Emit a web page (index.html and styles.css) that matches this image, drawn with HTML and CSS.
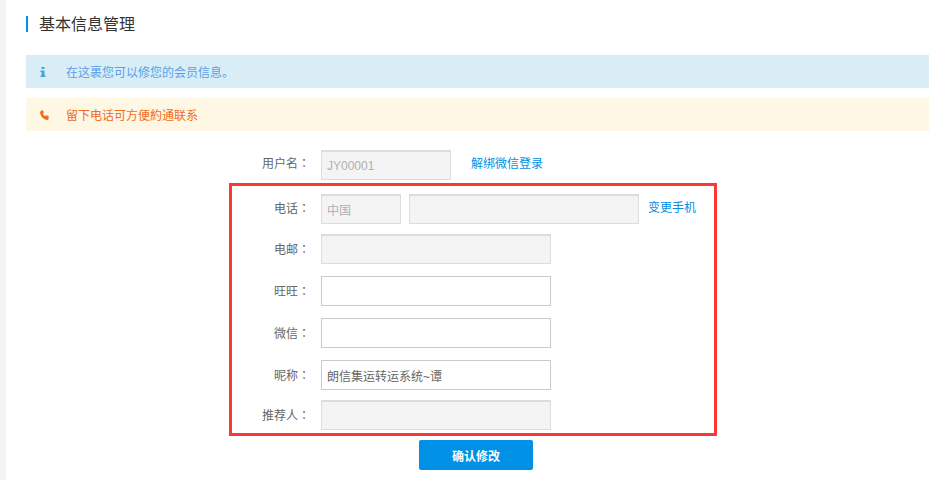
FILE: index.html
```html
<!DOCTYPE html>
<html lang="zh">
<head>
<meta charset="utf-8">
<title>基本信息管理</title>
<link rel="stylesheet" href="styles.css">
</head>
<body>
<div class="page">
  <div class="strip"></div>
  <main class="main">
    <h1 class="title">基本信息管理</h1>
    <div class="alert alert-info">
      <span class="alert-icon"><svg width="6" height="10" viewBox="0 0 6 10"><path fill="#3ea6dc" d="M1.500 0h3v2h-3zM.5 3.500h4V8.500H5.500V10H.5V8.500h1V5H.5z"/></svg></span>
      <span>在这裹您可以修您的会员信息。</span>
    </div>
    <div class="alert alert-warn">
      <span class="alert-icon"><svg width="10" height="10" viewBox="0 0 10 10"><path fill="#f26c21" d="M.4 1.500 2 .2c.3-.2.6-.1.8.2l1 1.700c.1.300.1.500-.1.700l-.8.800c.3 1.200 1.200 2.200 2.400 2.600l.8-.8c.2-.2.500-.2.700-.1l1.700 1c.3.200.4.500.2.800L8.300 9.700c-.2.200-.5.300-.8.300C3.500 9.500.5 6.500 0 2.300c0-.3.100-.6.400-.8z"/></svg></span>
      <span>留下电话可方便約通联系</span>
    </div>
    <form class="form">
      <div class="row row-first">
        <label class="label">用户名<span class="colon" lang="zh-TW">：</span></label>
        <input class="input disabled w130" value="JY00001" disabled>
        <a class="link link-wx">解绑微信登录</a>
      </div>
      <div class="marked">
        <div class="row row-phone">
          <label class="label">电话<span class="colon" lang="zh-TW">：</span></label>
          <input class="input disabled w80" value="中国" disabled>
          <input class="input disabled w230 gap8" disabled>
          <a class="link link-phone">变更手机</a>
        </div>
        <div class="row mt10"><label class="label">电邮<span class="colon" lang="zh-TW">：</span></label><input class="input disabled w230" disabled></div>
        <div class="row mt12"><label class="label">旺旺<span class="colon" lang="zh-TW">：</span></label><input class="input w230"></div>
        <div class="row mt12"><label class="label">微信<span class="colon" lang="zh-TW">：</span></label><input class="input w230"></div>
        <div class="row mt12"><label class="label">昵称<span class="colon" lang="zh-TW">：</span></label><input class="input w230" value="朗信集运转运系统~谭"></div>
        <div class="row mt10"><label class="label">推荐人<span class="colon" lang="zh-TW">：</span></label><input class="input disabled w230" disabled></div>
      </div>
      <button class="submit" type="button">确认修改</button>
    </form>
  </main>
</div>
</body>
</html>
```

FILE: styles.css
```css
* { box-sizing: border-box; }
html, body { margin: 0; padding: 0; background: #fff; overflow: hidden; }
body {
  font-family: "Liberation Sans", "Noto Sans CJK SC", sans-serif;
  font-size: 12px;
  color: #666;
}
.page { display: flex; width: 929px; height: 480px; overflow: hidden; }
.strip { width: 6px; flex: none; background: #f4f4f4; }
.main { flex: 1; min-width: 0; padding: 16px 0 0 20px; }
.title {
  margin: 0 0 23px;
  height: 16px;
  border-left: 2px solid #0090e6;
  padding-left: 11px;
  font-size: 16px;
  font-weight: 400;
  line-height: 17px;
  color: #333;
}
.alert {
  display: flex;
  align-items: center;
  height: 33px;
  margin-bottom: 10px;
  font-size: 12px;
}
.alert-icon { width: 40px; padding-left: 14px; display: flex; align-items: center; }
.alert-info { background: #d9edf7; color: #5b9fe8; }
.alert-warn { background: #fdf7e3; color: #f26c21; }
.form { display: block; padding-top: 9px; }
.row { display: flex; align-items: center; height: 30px; }
.label { text-align: right; flex: none; color: #666; margin-right: 11px; margin-top: -2px; }
.colon { font-family: "Noto Sans CJK TC", sans-serif; }
.input {
  height: 30px;
  border: 1px solid #ccc;
  background: #fff;
  padding: 0 5px;
  font: inherit;
  color: #666;
  outline: none;
  flex: none;
}
.disabled { background: #f4f4f4; border-color: #ddd; border-top-width: 2px; color: #b0b0b0; }
.w80 { width: 80px; }
.w130 { width: 130px; }
.w230 { width: 230px; }
.gap8 { margin-left: 8px; }
.link { color: #0090e6; white-space: nowrap; cursor: pointer; }
.link-wx { margin-left: 20px; margin-top: -5px; }
.link-phone { margin-left: 9px; margin-top: -5px; }
.row-first { padding-left: 200px; }
.row-first .label { width: 84px; margin-top: -6px; }
.row-phone .label { margin-top: -4px; }
.marked {
  width: 488px;
  height: 253px;
  margin: 3px 0 0 203px;
  border: 3px solid #fb3838;
  padding-top: 8px;
}
.marked .label { width: 78px; }
.mt10 { margin-top: 10px; }
.mt12 { margin-top: 12px; }
.submit {
  display: block;
  width: 114px;
  height: 30px;
  margin: 4px 0 0 393px;
  border: 0;
  border-radius: 2px;
  background: #0090e6;
  color: #fff;
  font: bold 12px "Liberation Sans", "Noto Sans CJK SC", sans-serif;
}
```
